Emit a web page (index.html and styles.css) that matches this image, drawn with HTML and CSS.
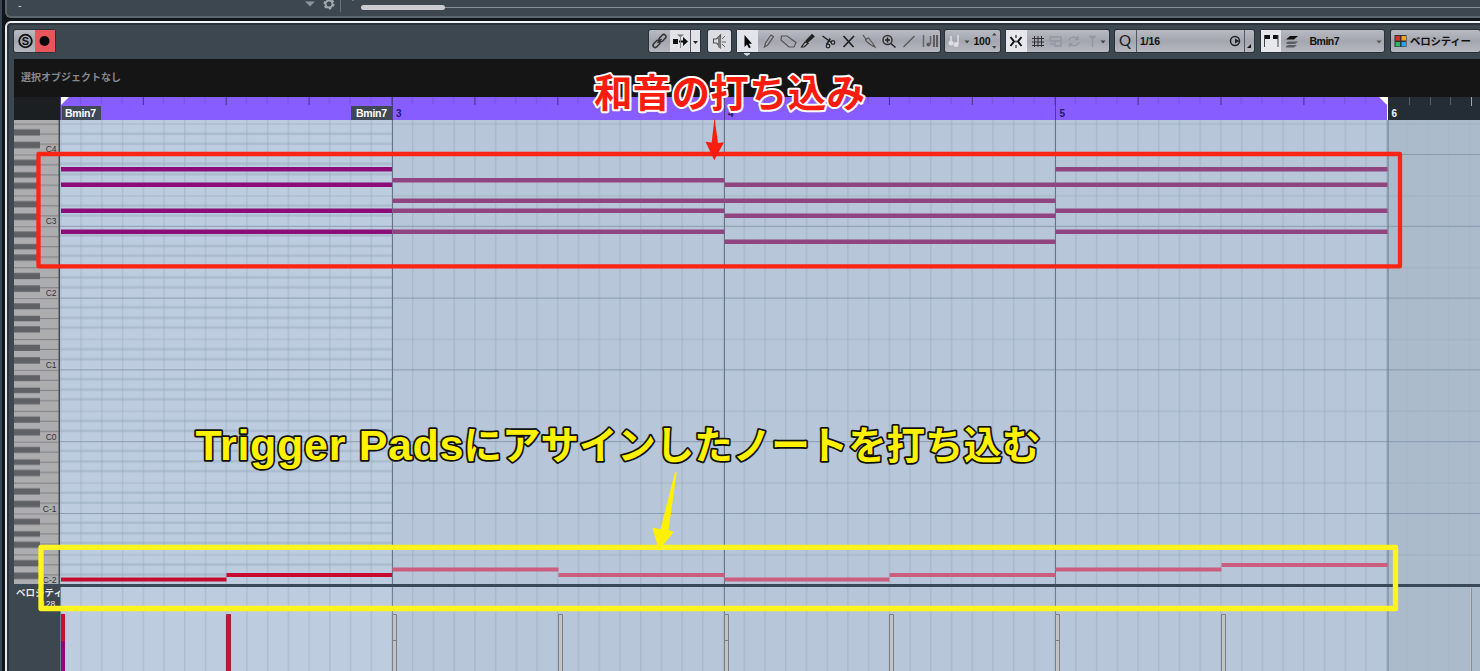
FILE: index.html
```html
<!DOCTYPE html>
<html lang="ja">
<head>
    <meta charset="UTF-8">
    <meta name="viewport" content="width=device-width, initial-scale=1.0">
    <title>Key Editor</title>
    <link rel="stylesheet" href="styles.css">
</head>
<body>
    <div class="topPanel">
        <span class="dash">-</span>
        <svg class="topIcons" width="60" height="16" viewBox="300 0 60 16">
            <path d="M305 1.500h10l-5 5z" fill="#8b939a"/>
            <circle cx="329" cy="4" r="3.500" fill="none" stroke="#a2a9af" stroke-width="2"/>
            <circle cx="329" cy="4" r="4.800" fill="none" stroke="#a2a9af" stroke-width="1.500" stroke-dasharray="2.500 2.500"/>
            <path d="M340.500 0v12" stroke="#68727b"/>
            <path d="M352 0h2" stroke="#a2a9af"/>
        </svg>
        <div class="scroll"><div class="thumb"></div></div>
    </div>
    <div class="editor">
        <div class="toolbar">
            <div class="group soloRec">
                <svg width="41" height="22" viewBox="0 0 41 22">
                    <circle cx="11.500" cy="11" r="6.300" fill="none" stroke="#111" stroke-width="1.800"/>
                    <text x="11.500" y="14.800" class="solo">S</text>
                    <path d="M21 0h20v22H21z" fill="#e8555a"/>
                    <circle cx="30.500" cy="11" r="5" fill="#080808"/>
                </svg>
            </div>
            <div class="divider"></div>
            <div class="group scrollTools">
                <svg width="51" height="22" viewBox="649 30 51 22">
                    <path d="M670 30h21v22h-21zM691 30h9v22h-9z" fill="#e2e3e8"/>
                    <g fill="none" stroke="#333" stroke-width="1.500">
                        <rect x="-4" y="-2.200" width="8" height="4.400" rx="2.200" transform="translate(656.500 44) rotate(-47)"/>
                        <rect x="-4" y="-2.200" width="8" height="4.400" rx="2.200" transform="translate(662.500 38) rotate(-47)"/>
                        <path d="M657.500 43l4-4"/>
                    </g>
                    <path d="M673 39h5v5h-5zM679 40.500h4v-3.500l5 4.500-5 4.500v-3.500h-4z" fill="#111"/>
                    <path d="M677 34.500h7l-3.500 3z" fill="#777"/>
                    <path d="M680.500 36v12" stroke="#888"/>
                    <path d="M690.500 30v22" stroke="#555"/>
                    <path d="M693 41h5l-2.500 3z" fill="#222"/>
                </svg>
            </div>
            <div class="group light speaker">
                <svg width="23" height="22" viewBox="708 30 23 22">
                    <path d="M713.500 39v4h3l4 4V35l-4 4z" fill="none" stroke="#555" stroke-width="1.200"/>
                    <path d="M718 36v11l3 2V38z" fill="#777"/>
                    <path d="M722 39l3-3M722 42h4M722 44l3 3" stroke="#666"/>
                </svg>
            </div>
            <div class="group tools">
                <svg width="203" height="22" viewBox="737 30 203 22">
                    <path d="M737 30h21v22h-21z" fill="#e4e5ea"/>
                    <path d="M744.500 35v12l2.500-2.500 2 3.700 1.700-.9-1.900-3.600h3.200z" fill="#050505"/>
                    <g fill="none" stroke="#555" stroke-width="1.200">
                        <path d="M764.500 47l1-4 5.500-8 2.500 1.700-5.500 8z"/>
                        <path d="M781.500 36h5.500l9 6.500-2 4.500h-5l-8-7z"/>
                        <path d="M805 42l-3.500 5h2.500l4-3.500z" stroke="#222"/>
                        <path d="M806 41l6-6.500 2 2-6.500 6z" fill="#222" stroke="#222"/>
                        <path d="M822.500 36l9 6.500M826.500 44.500l3.800-6" stroke="#222" stroke-width="1.500"/>
                        <circle cx="833" cy="42.500" r="1.800" stroke="#222"/><circle cx="828" cy="46" r="1.800" stroke="#222"/>
                        <path d="M843.500 36l10 11M854 36l-10.500 11" stroke="#222" stroke-width="1.700"/>
                        <path d="M863 35l3.500 5M865.500 39.500l3-1.500 4 5 2.500 4-4-2-4.500-3.500z"/>
                        <circle cx="887.500" cy="40" r="4.500" stroke="#333" stroke-width="1.500"/>
                        <path d="M885 40h5M887.500 37.500v5M891 43.500l4.500 4" stroke="#222" stroke-width="1.500"/>
                        <path d="M903.500 47l11-11"/>
                        <path d="M923.500 35v12M930.500 36v8" stroke="#666" stroke-width="1.500"/>
                        <path d="M934 35v12M937 35v12" stroke="#555" stroke-width="1.800"/>
                        <circle cx="928.500" cy="44.500" r="1.500" fill="#666"/>
                    </g>
                </svg>
                <div class="toolMark"></div>
            </div>
            <div class="group velocity">
                <svg width="55" height="22" viewBox="945 30 55 22">
                    <path d="M951 36v8M958 35v9" stroke="#dcdee4" stroke-width="1.500"/>
                    <circle cx="951" cy="43" r="2.500" fill="#dcdee4"/><circle cx="956" cy="44.500" r="2.500" fill="#dcdee4"/>
                    <path d="M964.500 40.500h5l-2.500 3z" fill="#444"/>
                    <text x="973.500" y="45.200" class="label" textLength="17">100</text>
                    <path d="M992 35.500h4.500l-2.200-2.700zM992 46h4.500l-2.200 2.700z" fill="#444"/>
                </svg>
            </div>
            <div class="group snap">
                <svg width="103" height="22" viewBox="1006 30 103 22">
                    <path d="M1006 30h21v22h-21z" fill="#e7e8ec"/>
                    <path d="M1010.500 37l3.500 4.500-3.500 4.500M1021.500 37l-3.500 4.500 3.500 4.500" fill="none" stroke="#111" stroke-width="2"/>
                    <path d="M1016 35v3M1016 40.500v2M1016 45v3" stroke="#222" stroke-width="1.200"/>
                    <path d="M1034.500 36v11M1038 36v11M1041.500 36v11M1032 38.500h12M1032 42h12M1032 45.500h12" stroke="#333"/>
                    <g fill="none" stroke="#94969d" stroke-width="1.300">
                        <path d="M1050 37h11v4h-11zM1055 41h6v5h-6zM1050 44h4"/>
                        <path d="M1069 40a5 4 0 0 1 9-1M1079 42a5 4 0 0 1-9 2M1078 36v3.500h-3M1069.500 47v-3h3"/>
                        <path d="M1092.500 38v9M1090 36.500h5l-2.500 2.500z"/>
                    </g>
                    <path d="M1100.500 40.500h5l-2.500 3z" fill="#444"/>
                </svg>
            </div>
            <div class="group quantize">
                <svg width="139" height="22" viewBox="1115 30 139 22">
                    <text x="1119" y="46" class="q">Q</text>
                    <path d="M1136.500 30v22M1244.500 30v22" stroke="#555a61"/>
                    <text x="1140" y="45.200" class="label" textLength="20">1/16</text>
                    <circle cx="1235" cy="41" r="4.500" fill="none" stroke="#222" stroke-width="1.500"/>
                    <path d="M1235 38.500l4.500 2.500-4.500 2.500z" fill="#222"/>
                    <path d="M1251 44v4h-4z" fill="#111"/>
                </svg>
            </div>
            <div class="group chord">
                <svg width="123" height="22" viewBox="1261 30 123 22">
                    <path d="M1261 30h20v22h-20z" fill="#e7e8ec"/>
                    <path d="M1265 35h5v4h-5zM1273 35h5v4h-5z" fill="#111"/>
                    <path d="M1264.500 35v12M1278 35v12" stroke="#444"/>
                    <path d="M1286 39.500l4-3.500h8l-4 3.500z" fill="#111"/>
                    <path d="M1286 43l2-1.500h10l-3 2.500h-8zM1286 46.500l2-1.500h9l-3 2.500h-8z" fill="#5b5e64"/>
                    <text x="1309.500" y="45.200" class="label" textLength="30">Bmin7</text>
                    <path d="M1376.500 40.500h5l-2.500 3z" fill="#555"/>
                </svg>
            </div>
            <div class="group colors">
                <svg width="89" height="22" viewBox="1391 30 89 22">
                    <path d="M1394.500 35h12v12h-12z" fill="#333"/>
                    <path d="M1395.500 36h4.500v4.500h-4.500z" fill="#d92d27"/>
                    <path d="M1401.500 36h4.500v4.500h-4.500z" fill="#f0a12a"/>
                    <path d="M1395.500 42h4.500v4.500h-4.500z" fill="#2ab865"/>
                    <path d="M1401.500 42h4.500v4.500h-4.500z" fill="#2f9fe4"/>
                    <text x="1410" y="45" class="label" textLength="61">ベロシティー</text>
                </svg>
            </div>
        </div>
        <div class="infoLine">選択オブジェクトなし</div>
        <div class="rulerRow">
            <div class="corner"></div>
            <svg class="ruler" width="1420" height="23" viewBox="60 97 1420 23">
                <defs>
                    <pattern id="ticks" x="59.900" y="97" width="82.900" height="23" patternUnits="userSpaceOnUse">
                        <path d="M.5 0v8" stroke="#42307c"/>
                        <path d="M20.700 0v7M41.400 0v7M62.200 0v7" stroke="#7453d0"/>
                    </pattern>
                </defs>
                <path d="M60 97h1420v23H60z" fill="#242d35"/>
                <path d="M61 97h1327v23H61z" fill="#875dff"/>
                <path d="M61 97h1327v23H61z" fill="url(#ticks)"/>
                <path d="M60.500 97v23M392.500 97v23M724.500 97v23M1055.500 97v23" stroke="#4c3b86"/>
                <path d="M61 97h8l-8 8zM1379 97h9v23h-1v-15z" fill="#fff"/>
                <path d="M1409.500 97v8M1430.500 97v8M1450.500 97v8" stroke="#53606a"/>
                <path d="M1471.500 97v9" stroke="#a1a9af"/>
                <path d="M62 106h39v14H62zM351 106h41v14h-41z" fill="#3f4855"/>
                <text x="65" y="117" class="chordName" textLength="31">Bmin7</text>
                <text x="356" y="117" class="chordName" textLength="31">Bmin7</text>
                <text x="396" y="117" class="barNo">3</text>
                <text x="728" y="117" class="barNo">4</text>
                <text x="1059.500" y="117" class="barNo">5</text>
                <text x="1391.500" y="117" class="barNo white">6</text>
            </svg>
        </div>
        <div class="rollRow">
            <svg class="keys" width="46" height="464" viewBox="14 120 46 464">
                <defs>
                    <!-- one octave, from the line below C up to the next one -->
                    <pattern id="octave" x="14" y="154.500" width="46" height="71.800" patternUnits="userSpaceOnUse">
                        <path d="M0 0h46v71.800H0z" fill="#adadaf"/>
                        <path d="M0 .3h45M0 10.300h45M0 20.500h45M0 30.800h45M0 41.500h45M0 51.300h45M0 61.500h45" stroke="#77777a" stroke-width=".9"/>
                        <path d="M0 5.200h26v6H0zM0 17.600h26v5.600H0zM0 28.200h26v6.300H0zM0 46.600h26v6.300H0zM0 59.200h26v6.300H0z" fill="#606164"/>
                    </pattern>
                </defs>
                <path d="M14 120h45v464H14z" fill="url(#octave)"/>
                <path d="M59.500 120v464" stroke="#484e56" stroke-width="2"/>
                <g class="keyName">
                    <text x="56.500" y="152">C4</text>
                    <text x="56.500" y="224">C3</text>
                    <text x="56.500" y="296">C2</text>
                    <text x="56.500" y="368">C1</text>
                    <text x="56.500" y="439.500">C0</text>
                    <text x="56.500" y="511.500">C-1</text>
                    <text x="56.500" y="583">C-2</text>
                </g>
            </svg>
            <svg class="roll" width="1420" height="464" viewBox="60 120 1420 464">
                <defs>
                    <pattern id="beats" x="59.700" y="0" width="20.723" height="671" patternUnits="userSpaceOnUse">
                        <path d="M.8 0v671" stroke="#8698ad" stroke-opacity=".42"/>
                    </pattern>
                    <pattern id="rows" x="0" y="154" width="1480" height="71.800" patternUnits="userSpaceOnUse">
                        <path d="M0 .5h1480" stroke="#7e91a8" stroke-opacity=".8"/>
                        <path d="M0 42h1480" stroke="#8799ae" stroke-opacity=".4"/>
                    </pattern>
                    <pattern id="blackRows" x="0" y="154" width="331" height="71.800" patternUnits="userSpaceOnUse">
                        <path d="M0 9.800h331M0 20.300h331M0 29.800h331M0 51.500h331M0 61.500h331" stroke="#8fa2b8" stroke-width="2.500" stroke-opacity=".38"/>
                    </pattern>
                </defs>
                <path d="M60 120h332v464H60z" fill="#bdccde"/>
                <path d="M392 120h996v464H392z" fill="#b7c6d8"/>
                <path d="M1388 120h92v464h-92z" fill="#abbbcc"/>
                <path d="M60 120h332v464H60z" fill="url(#blackRows)"/>
                <path d="M60 120h1328v464H60z" fill="url(#beats)"/>
                <path d="M1388 120h92v464h-92z" fill="url(#beats)" opacity=".3"/>
                <path d="M60 120h1420v464H60z" fill="url(#rows)"/>
                <path d="M392.500 120v464M724.500 120v464M1055.500 120v464M1388 120v464" stroke="#66768a"/>
                <g class="chordNotes">
                    <path class="n1" d="M61 167h331v4.500H61zM61 182.500h331v4.500H61zM61 208.500h331v4.500H61zM61 229.500h331v4.500H61z"/>
                    <path class="n2" d="M392.500 178h332v4.500h-332zM392.500 198.500h332v4.500h-332zM392.500 208.500h332v4.500h-332zM392.500 229.500h332v4.500h-332z"/>
                    <path class="n2" d="M724.500 182.500h331v4.500h-331zM724.500 198.500h331v4.500h-331zM724.500 213.500h331v4.500h-331zM724.500 239.500h331v4.500h-331z"/>
                    <path class="n2" d="M1055.500 167h332v4.500h-332zM1055.500 182.500h332v4.500h-332zM1055.500 208.500h332v4.500h-332zM1055.500 229.500h332v4.500h-332z"/>
                </g>
                <g class="padNotes">
                    <path class="p1" d="M61 577.500h165.500v4H61zM226.500 573h165.500v4H226.500z"/>
                    <path class="p2" d="M392.500 567.500h166v4h-166zM558.500 573h166v4h-166zM724.500 577.500h165v4h-165zM889.500 573h166v4h-166zM1055.500 567.500h166v4h-166zM1221.500 563h166v4h-166z"/>
                </g>
            </svg>
        </div>
        <div class="splitter"></div>
        <div class="laneRow">
            <div class="laneHead">
                <span class="laneName">ベロシティ</span>
                <span class="laneMax">128</span>
            </div>
            <svg class="lane" width="1420" height="84" viewBox="60 587 1420 84">
                <path d="M60 587h332v84H60z" fill="#bdccde"/>
                <path d="M392 587h996v84H392z" fill="#b7c6d8"/>
                <path d="M1388 587h92v84h-92z" fill="#abbbcc"/>
                <path d="M60 587h1328v84H60z" fill="url(#beats)"/>
                <path d="M1388 587h92v84h-92z" fill="url(#beats)" opacity=".3"/>
                <path d="M60.500 587v84M392.500 587v27M724.500 587v27M1055.500 587v27M1388 587v84" stroke="#718196"/>
                <path d="M61 614h4v27h-4z" fill="#c8122f"/>
                <path d="M61 641h4v30h-4z" fill="#8d0875"/>
                <path d="M226.500 614.500h4v58h-4z" fill="#d50e37" stroke="#9c203d"/>
                <g fill="#c2c3c4" stroke="#7c8084">
                    <path d="M392.500 614.500h4v58h-4zM558.500 614.500h4v58h-4zM724.500 614.500h4v58h-4zM889.500 614.500h4v58h-4zM1055.500 614.500h4v58h-4zM1221.500 614.500h4v58h-4z"/>
                    <path d="M392.500 640.500h4M724.500 640.500h4M1055.500 640.500h4"/>
                </g>
                <path d="M1471.500 588v83" stroke="#8c8d97"/>
                <path d="M1470.500 588v83" stroke="#c5c2c9"/>
            </svg>
        </div>
    </div>
    <!-- notes drawn over the editor -->
    <svg class="annotations" width="1480" height="671" viewBox="0 0 1480 671">
        <g class="red">
            <rect x="38.500" y="154" width="1361.500" height="112.300"/>
            <path d="M714.500 117.500l3.500 25.500 6-.8-9.700 18-8.800-18.500 6.200.9z"/>
            <text x="594" y="106.500" textLength="271">和音の打ち込み</text>
        </g>
        <g class="yellow">
            <rect x="41" y="547.300" width="1354.500" height="61.200"/>
            <path d="M675 472l1.700.4-8.200 57.600 5.300 2-15 18.500-6.500-23 8.200 1.800z"/>
            <text class="latin" x="195.500" y="460" textLength="268">Trigger Pads</text>
            <text x="463.500" y="459" textLength="577">にアサインしたノートを打ち込む</text>
        </g>
    </svg>
</body>
</html>
```
FILE: styles.css
```css
body{
    margin: 0;
    width: 1480px;
    height: 671px;
    overflow: hidden;
    position: relative;
    background-color: #11151a;
    border-left: 2px solid #3a4654;
    box-sizing: border-box;
    font-family: "Liberation Sans", "Noto Sans CJK JP", sans-serif;
}
svg{
    display: block;
    flex: none;
}
.topPanel{
    display: flex;
    height: 18px;
    margin-left: 3px;
    box-sizing: border-box;
    background-color: #3d474f;
    border-left: 2px solid #5b6671;
    border-bottom: 2px solid #5b6671;
    border-bottom-left-radius: 6px;
}
.dash{
    width: 293px;
    padding-left: 11px;
    box-sizing: border-box;
    font-size: 11px;
    line-height: 11px;
    color: #d5d9dc;
}
.scroll{
    flex: 1;
    height: 1px;
    margin: 7px 0 0 1px;
    background-color: #87909a;
}
.thumb{
    width: 84px;
    height: 5px;
    margin-top: -2px;
    position: relative;
    border-radius: 3px;
    background-color: #cacbce;
}
.editor{
    margin: 3px 0 0 3px;
    height: 650px;
    box-sizing: border-box;
    border-top: 2px solid #f2f3f5;
    border-left: 2px solid #e9eaec;
    border-top-left-radius: 6px;
    background-color: #3d474f;
    box-shadow: inset 2px 2px 0 #29313a;
    padding-left: 7px;
    overflow: hidden;
}
.toolbar{
    display: flex;
    height: 36px;
    padding-top: 7px;
    box-sizing: border-box;
}
.group{
    height: 22px;
    flex: none;
    margin-right: 6px;
    border-radius: 2px;
    background: linear-gradient(#b9bbc3, #a3a6af 50%, #b7b9c1);
    box-shadow: 0 0 0 1px #29323b;
}
.light{
    background: #dcdde2;
}
.divider{
    width: 1px;
    height: 22px;
    background-color: #69737c;
    margin-right: 588px;
}
.scrollTools{
    margin-right: 8px;
}
.tools{
    margin-right: 5px;
}
.toolMark{
    width: 6px;
    height: 3px;
    margin: 1px 0 0 7px;
    background-color: #d5d8dc;
    clip-path: polygon(0 0, 100% 0, 100% 33%, 50% 100%, 0 33%);
}
.quantize,
.chord{
    margin-right: 7px;
}
.solo{
    font-size: 11px;
    font-weight: bold;
    text-anchor: middle;
    fill: #111;
}
.label{
    font-size: 10.5px;
    font-weight: bold;
    fill: #111;
}
.q{
    font-family: Lato, sans-serif;
    font-size: 15px;
    fill: #1c1c1c;
}
.infoLine{
    height: 38px;
    padding-left: 7px;
    line-height: 38px;
    font-size: 10px;
    font-weight: bold;
    color: #858a91;
    background-color: #151515;
}
.rulerRow,
.rollRow,
.laneRow{
    display: flex;
}
.corner{
    width: 46px;
    height: 23px;
    background-color: #1c1f21;
}
.chordName{
    font-size: 10.5px;
    font-weight: bold;
    fill: #fff;
}
.barNo{
    font-size: 10px;
    font-weight: bold;
    fill: #281b5e;
}
.white{
    fill: #f5f5f5;
}
.keyName{
    font-size: 8.5px;
    text-anchor: end;
    fill: #303236;
}
.n1{
    fill: #8c0c78;
}
.n2{
    fill: #904480;
}
.p1{
    fill: #c60b2f;
}
.p2{
    fill: #cb5e7e;
}
.splitter{
    height: 3px;
    background-color: #3b4857;
}
.laneHead{
    width: 46px;
    height: 84px;
    display: flex;
    flex-direction: column;
    overflow: hidden;
    white-space: nowrap;
    color: #e2e4e6;
}
.laneName{
    padding-left: 2px;
    font-size: 9.5px;
    font-weight: bold;
    line-height: 11px;
}
.laneMax{
    padding-left: 27px;
    font-size: 8.5px;
    line-height: 12px;
}
.annotations{
    position: absolute;
    left: -2px;
    top: 0;
}
.annotations rect{
    fill: none;
    stroke-linejoin: round;
}
.annotations text{
    font-family: "Noto Sans CJK JP", sans-serif;
    font-size: 38.5px;
    font-weight: bold;
    paint-order: stroke;
    stroke-linejoin: round;
}
.red path,
.red text{
    fill: #fb1c10;
}
.red rect{
    stroke: #fc2415;
    stroke-width: 4.3px;
}
.red text{
    stroke: #fff;
    stroke-width: 4px;
}
.yellow path,
.yellow text{
    fill: #fff100;
}
.yellow rect{
    stroke: #fff420;
    stroke-width: 5.3px;
}
.yellow text{
    stroke: #111;
    stroke-width: 3.5px;
}
.annotations .latin{
    font-family: "Liberation Sans", sans-serif;
    font-size: 43px;
}
```
